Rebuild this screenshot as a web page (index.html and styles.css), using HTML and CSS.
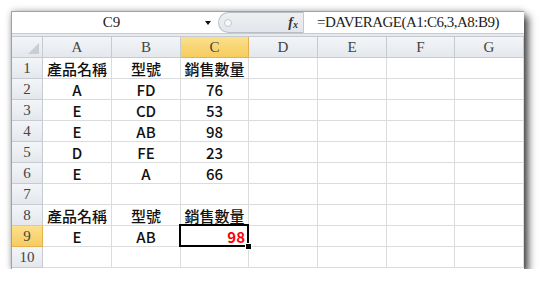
FILE: index.html
```html
<!doctype html>
<html>
<head>
    <meta charset="utf-8"/>
    <title>DAVERAGE</title>
    <link rel="stylesheet" href="styles.css">
</head>
<body>
<div class="window">
    <div class="fbar">
        <div class="namebox">
            <span class="name">C9</span>
            <span class="drop"></span>
        </div>
        <div class="grip">
            <span class="knob"></span>
            <span class="fx">f<sub>x</sub></span>
        </div>
        <div class="formula">=DAVERAGE(A1:C6,3,A8:B9)</div>
    </div>
    <div class="sep"></div>

    <div class="sheet">
        <div class="hd corner"><span class="tri"></span></div>
        <div class="hd col">A</div>
        <div class="hd col">B</div>
        <div class="hd col sel">C</div>
        <div class="hd col">D</div>
        <div class="hd col">E</div>
        <div class="hd col">F</div>
        <div class="hd col">G</div>

        <div class="hd row">1</div>
        <div class="c">產品名稱</div><div class="c">型號</div><div class="c">銷售數量</div>
        <div class="c"></div><div class="c"></div><div class="c"></div><div class="c"></div>

        <div class="hd row">2</div>
        <div class="c">A</div><div class="c">FD</div><div class="c">76</div>
        <div class="c"></div><div class="c"></div><div class="c"></div><div class="c"></div>

        <div class="hd row">3</div>
        <div class="c">E</div><div class="c">CD</div><div class="c">53</div>
        <div class="c"></div><div class="c"></div><div class="c"></div><div class="c"></div>

        <div class="hd row">4</div>
        <div class="c">E</div><div class="c">AB</div><div class="c">98</div>
        <div class="c"></div><div class="c"></div><div class="c"></div><div class="c"></div>

        <div class="hd row">5</div>
        <div class="c">D</div><div class="c">FE</div><div class="c">23</div>
        <div class="c"></div><div class="c"></div><div class="c"></div><div class="c"></div>

        <div class="hd row">6</div>
        <div class="c">E</div><div class="c">A</div><div class="c">66</div>
        <div class="c"></div><div class="c"></div><div class="c"></div><div class="c"></div>

        <div class="hd row">7</div>
        <div class="c"></div><div class="c"></div><div class="c"></div>
        <div class="c"></div><div class="c"></div><div class="c"></div><div class="c"></div>

        <div class="hd row">8</div>
        <div class="c">產品名稱</div><div class="c">型號</div><div class="c">銷售數量</div>
        <div class="c"></div><div class="c"></div><div class="c"></div><div class="c"></div>

        <div class="hd row sel">9</div>
        <div class="c">E</div><div class="c">AB</div><div class="c active">98</div>
        <div class="c"></div><div class="c"></div><div class="c"></div><div class="c"></div>

        <div class="hd row">10</div>
        <div class="c"></div><div class="c"></div><div class="c"></div>
        <div class="c"></div><div class="c"></div><div class="c"></div><div class="c"></div>
    </div>
</div>
</body>
</html>
```

FILE: styles.css
```css
body {
    margin: 0;
    background: #fff;
}
.window {
    width: 513px;
    height: 258px;
    margin: 11px 0 0 11px;
    box-sizing: border-box;
    border-left: 1px solid #9da2a8;
    border-top: 1px solid #9da2a8;
    background: #fff;
    box-shadow: 0 -1px 6px rgba(0, 0, 0, 0.18), 4px 5px 8px rgba(0, 0, 0, 0.75);
    overflow: hidden;
}
.fbar {
    display: flex;
    height: 21px;
    font-family: "Liberation Serif", serif;
    font-size: 15px;
    color: #222;
}
.namebox {
    width: 204px;
    display: flex;
    align-items: center;
}
.name {
    flex: 1;
    text-align: center;
    padding-left: 6px;
}
.drop {
    width: 0;
    height: 0;
    border-left: 3px solid transparent;
    border-right: 3px solid transparent;
    border-top: 4px solid #111;
    margin-right: 5px;
}
.grip {
    width: 86px;
    display: flex;
    align-items: center;
    justify-content: space-between;
    background: linear-gradient(#eef0f3, #e2e5ea);
    border: 1px solid #b9bec5;
    border-right: 1px solid #c5c9cf;
    border-radius: 11px 0 0 11px;
    box-sizing: border-box;
    padding: 0 5px;
    margin-left: 2px;
}
.knob {
    width: 6px;
    height: 6px;
    border-radius: 50%;
    border: 1px solid #c4c8ce;
    background: #f7f8fa;
}
.fx {
    font-style: italic;
    font-weight: bold;
    font-size: 14px;
    color: #333;
}
.fx sub {
    font-size: 10px;
    vertical-align: -1px;
}
.formula {
    flex: 1;
    display: flex;
    align-items: center;
    padding-left: 13px;
    letter-spacing: -0.5px;
}
.sep {
    height: 4px;
    box-sizing: border-box;
    border-top: 1px solid #c7cbd1;
    border-bottom: 1px solid #c7cbd1;
    background: #e6e9ed;
}
.sheet {
    display: grid;
    grid-template-columns: 31px 69px 69px 68px 69px 69px 68px 69px;
    grid-auto-rows: 21px;
}
.sheet > div {
    box-sizing: border-box;
    border-right: 1px solid #dadcdd;
    border-bottom: 1px solid #dadcdd;
    display: flex;
    align-items: center;
    justify-content: center;
}
.sheet > .hd {
    background: linear-gradient(#f3f5f8, #e4e8ed);
    border-color: #c6cbd2;
    font-family: "Liberation Serif", serif;
    font-size: 15px;
    color: #444;
}
.sheet > .hd.sel {
    background: linear-gradient(#fbe08c, #f6cc5f);
    border-color: #e3b24a;
}
.corner {
    position: relative;
}
.tri {
    position: absolute;
    right: 3px;
    bottom: 3px;
    width: 0;
    height: 0;
    border-left: 11px solid transparent;
    border-bottom: 11px solid #c9ced5;
}
.c {
    font-family: "Noto Sans CJK TC", sans-serif;
    font-weight: 500;
    font-size: 15px;
    color: #111;
}
.sheet > .active {
    position: relative;
    justify-content: flex-end;
    padding-right: 3px;
    color: #ff0000;
    font-weight: bold;
}
.active::before {
    content: "";
    position: absolute;
    top: -2px;
    left: -2px;
    right: -1px;
    bottom: -1px;
    border: 2px solid #000;
}
.active::after {
    content: "";
    position: absolute;
    right: -4px;
    bottom: -4px;
    width: 5px;
    height: 5px;
    background: #000;
    border: 1px solid #fff;
}
```
